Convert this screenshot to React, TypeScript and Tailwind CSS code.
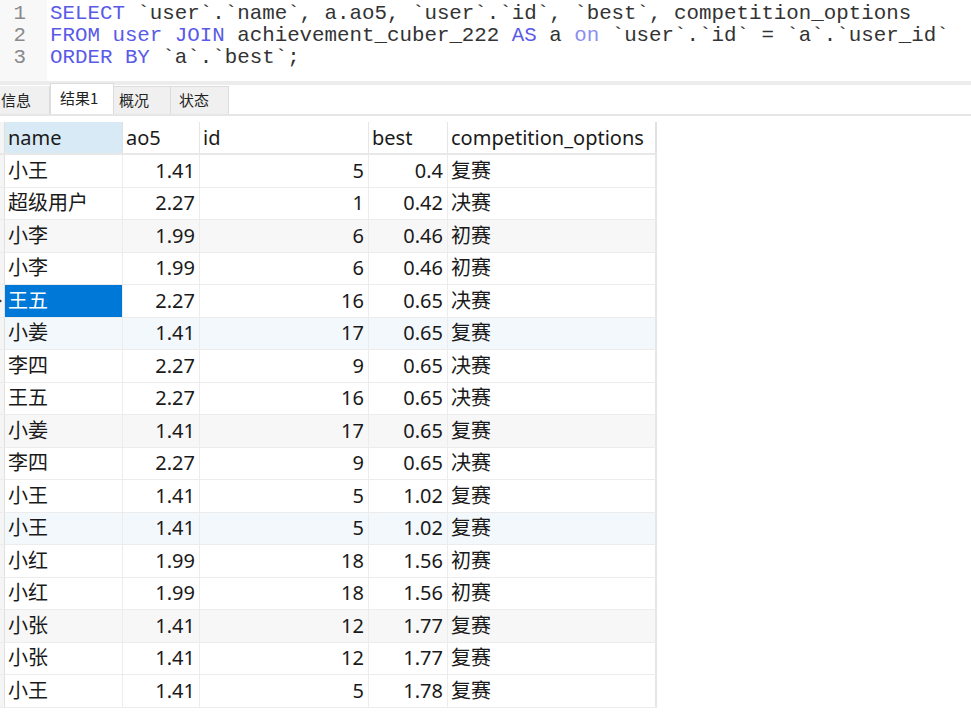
import React from "react";

type Row = { name: string; ao5: string; id: string; best: string; comp: string };

const rows: Row[] = [
  { name: "小王", ao5: "1.41", id: "5", best: "0.4", comp: "复赛" },
  { name: "超级用户", ao5: "2.27", id: "1", best: "0.42", comp: "决赛" },
  { name: "小李", ao5: "1.99", id: "6", best: "0.46", comp: "初赛" },
  { name: "小李", ao5: "1.99", id: "6", best: "0.46", comp: "初赛" },
  { name: "王五", ao5: "2.27", id: "16", best: "0.65", comp: "决赛" },
  { name: "小姜", ao5: "1.41", id: "17", best: "0.65", comp: "复赛" },
  { name: "李四", ao5: "2.27", id: "9", best: "0.65", comp: "决赛" },
  { name: "王五", ao5: "2.27", id: "16", best: "0.65", comp: "决赛" },
  { name: "小姜", ao5: "1.41", id: "17", best: "0.65", comp: "复赛" },
  { name: "李四", ao5: "2.27", id: "9", best: "0.65", comp: "决赛" },
  { name: "小王", ao5: "1.41", id: "5", best: "1.02", comp: "复赛" },
  { name: "小王", ao5: "1.41", id: "5", best: "1.02", comp: "复赛" },
  { name: "小红", ao5: "1.99", id: "18", best: "1.56", comp: "初赛" },
  { name: "小红", ao5: "1.99", id: "18", best: "1.56", comp: "初赛" },
  { name: "小张", ao5: "1.41", id: "12", best: "1.77", comp: "复赛" },
  { name: "小张", ao5: "1.41", id: "12", best: "1.77", comp: "复赛" },
  { name: "小王", ao5: "1.41", id: "5", best: "1.78", comp: "复赛" },
];

const rowBg = (i: number) => {
  if (i === 5 || i === 11) return "bg-[#f3f8fd]";
  if (i === 2 || i === 8 || i === 14) return "bg-[#f7f7f7]";
  return "bg-white";
};

const K = ({ children }: { children: React.ReactNode }) => (
  <span className="text-[#5a5ae8]">{children}</span>
);
const L = ({ children }: { children: React.ReactNode }) => (
  <span className="text-[#8c8cf5]">{children}</span>
);

export default function App() {
  return (
    <div className="w-[971px] h-[713px] overflow-hidden bg-white text-[#1a1a1a]">
      {/* Editor */}
      <div className="flex h-[81px] font-['Liberation_Mono',monospace] text-[20.8px] leading-[22px] text-[#333]">
        <div className="w-[47px] bg-[#f8f8f8] pt-[3px] pr-[21px] text-right text-[#8a8a8a]">
          <div>1</div>
          <div>2</div>
          <div>3</div>
        </div>
        <div className="flex-1 pl-[3px] pt-[3px] whitespace-pre">
          <div>
            <K>SELECT</K> `user`.`name`, a.ao5, `user`.`id`, `best`, competition_options
          </div>
          <div>
            <K>FROM</K> <K>user</K> <K>JOIN</K> achievement_cuber_222 <K>AS</K> a <L>on</L> `user`.`id` = `a`.`user_id`
          </div>
          <div>
            <K>ORDER</K> <K>BY</K> `a`.`best`;
          </div>
        </div>
      </div>
      <div className="h-[4px] bg-[#ececec]" />

      {/* Tabs */}
      <div className="flex h-[31px] items-end bg-white font-['Noto_Sans_CJK_SC','Noto_Sans',sans-serif] text-[15px] text-[#222] border-b-2 border-[#e6e6e6]">
        <div className="h-[28px] w-[50px] bg-[#f0f0f0] border-r border-[#dcdcdc] flex items-center pl-[1px]">信息</div>
        <div className="h-[31px] w-[64px] bg-white border-x border-t border-[#dcdcdc] flex items-center pl-[9px] pb-[2px]">结果1</div>
        <div className="h-[28px] w-[57px] bg-[#f0f0f0] border-r border-t border-[#dcdcdc] flex items-center pl-[5px]">概况</div>
        <div className="h-[28px] w-[58px] bg-[#f0f0f0] border-r border-t border-[#dcdcdc] flex items-center pl-[8px]">状态</div>
      </div>

      {/* Table */}
      <div className="pt-[6px] font-['Noto_Sans','Noto_Sans_CJK_SC',sans-serif] text-[20px]">
        <div className="flex h-[33px] border-b-2 border-[#e8e8e8] w-[657px]">
          <div className="w-[5px] border-r border-[#e0e0e0] bg-[#f5f5f5]" />
          <div className="w-[118px] bg-[#d9eaf7] border-r border-[#e0e0e0] pl-[3px] flex items-center">name</div>
          <div className="w-[77px] border-r border-[#e6e6e6] pl-[3px] flex items-center">ao5</div>
          <div className="w-[169px] border-r border-[#e6e6e6] pl-[3px] flex items-center">id</div>
          <div className="w-[79px] border-r border-[#e6e6e6] pl-[3px] flex items-center">best</div>
          <div className="w-[209px] border-r-2 border-[#e0e0e0] pl-[3px] flex items-center">competition_options</div>
        </div>
        {rows.map((r, i) => {
          const sel = i === 4;
          return (
            <div key={i} className={`flex h-[32.5px] w-[657px] border-b border-[#ececec] ${rowBg(i)}`}>
              <div className="relative w-[5px] border-r border-[#e0e0e0] bg-[#f5f5f5]">
                {sel && (
                  <span className="absolute left-[-2px] top-[13px] h-0 w-0 border-y-[3px] border-l-[4px] border-y-transparent border-l-[#333]" />
                )}
              </div>
              <div
                className={`w-[118px] border-r border-[#ececec] pl-[3px] flex items-center ${
                  sel ? "bg-[#0078d7] text-white" : ""
                }`}
              >
                {r.name}
              </div>
              <div className="w-[77px] border-r border-[#ececec] pr-[4px] flex items-center justify-end">{r.ao5}</div>
              <div className="w-[169px] border-r border-[#ececec] pr-[4px] flex items-center justify-end">{r.id}</div>
              <div className="w-[79px] border-r border-[#ececec] pr-[4px] flex items-center justify-end">{r.best}</div>
              <div className="w-[209px] border-r-2 border-[#e6e6e6] pl-[3px] flex items-center">{r.comp}</div>
            </div>
          );
        })}
      </div>
    </div>
  );
}
